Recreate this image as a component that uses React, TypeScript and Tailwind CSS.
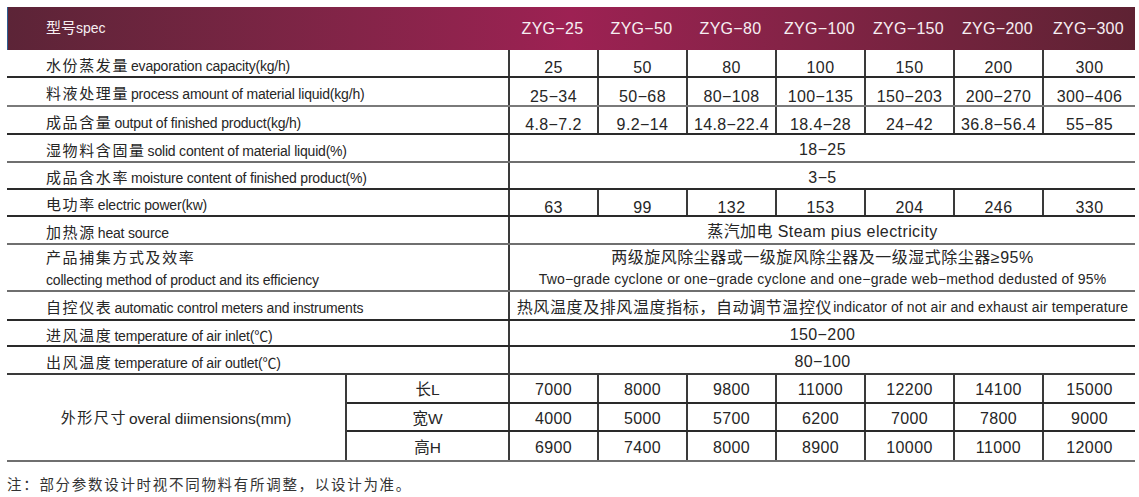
import React from "react";

const models = ["ZYG−25", "ZYG−50", "ZYG−80", "ZYG−100", "ZYG−150", "ZYG−200", "ZYG−300"];
const colW = ["w-[89px]", "w-[89px]", "w-[89px]", "w-[89px]", "w-[89px]", "w-[89px]", "w-[93px]"];

function Label({ zh, en }: { zh: string; en: string }) {
  return (
    <div className="flex w-[501px] shrink-0 items-center pl-[39px] pt-[6px]">
      <span className="text-[15px] tracking-[1.6px]">{zh}</span>
      <span className="ml-[2px] text-[14px] tracking-[-0.2px]">{en}</span>
    </div>
  );
}

function Cells({ values, pad = "pt-[10px]" }: { values: string[]; pad?: string }) {
  return (
    <>
      {values.map((v, i) => (
        <div
          key={i}
          className={`${colW[i]} ${pad} flex shrink-0 items-center justify-center border-l-2 border-[#3a3a3a] text-[16px] tracking-[0.4px]`}
        >
          {v}
        </div>
      ))}
    </>
  );
}

function Span({ children }: { children: React.ReactNode }) {
  return (
    <div className="flex flex-1 items-center justify-center border-l-2 border-[#3a3a3a] pt-[4px] text-[16px] tracking-[0.4px]">
      {children}
    </div>
  );
}

function Row({ cls, children }: { cls: string; children: React.ReactNode }) {
  return <div className={`flex border-b-2 ${cls}`}>{children}</div>;
}

export default function App() {
  return (
    <div className="h-[497px] w-[1139px] bg-white pl-[7px] pt-[7px] font-['Liberation_Sans','Noto_Sans_CJK_SC',sans-serif] text-[#262626]">
      <div className="w-[1128px]">
        <div className="flex h-[43px] border-l border-[#2f5f92] bg-linear-to-r from-[#5c2437] via-[#9d2153] to-[#5e2233] text-[#f6eef2]">
          <div className="flex w-[500px] shrink-0 items-center pl-[38px]">
            <span className="text-[15px]">型号</span>
            <span className="text-[14px]">spec</span>
          </div>
          {models.map((m, i) => (
            <div key={m} className={`${colW[i]} flex shrink-0 items-center justify-center text-[16px] tracking-[0.3px]`}>
              {m}
            </div>
          ))}
        </div>

        <Row cls="h-[28px] border-[#2a2a2a]">
          <Label zh="水份蒸发量" en="evaporation capacity(kg/h)" />
          <Cells values={["25", "50", "80", "100", "150", "200", "300"]} />
        </Row>
        <Row cls="h-[29px] border-[#7a7a7a]">
          <Label zh="料液处理量" en="process amount of material liquid(kg/h)" />
          <Cells values={["25−34", "50−68", "80−108", "100−135", "150−203", "200−270", "300−406"]} />
        </Row>
        <Row cls="h-[28px] border-[#2a2a2a]">
          <Label zh="成品含量" en="output of finished product(kg/h)" />
          <Cells values={["4.8−7.2", "9.2−14", "14.8−22.4", "18.4−28", "24−42", "36.8−56.4", "55−85"]} />
        </Row>
        <Row cls="h-[28px] border-[#6f6f6f]">
          <Label zh="湿物料含固量" en="solid content of material liquid(%)" />
          <Span>18−25</Span>
        </Row>
        <Row cls="h-[27px] border-[#2a2a2a]">
          <Label zh="成品含水率" en="moisture content of finished product(%)" />
          <Span>3−5</Span>
        </Row>
        <Row cls="h-[27px] border-[#2a2a2a]">
          <Label zh="电功率" en="electric power(kw)" />
          <Cells values={["63", "99", "132", "153", "204", "246", "330"]} />
        </Row>
        <Row cls="h-[28px] border-[#6f6f6f]">
          <Label zh="加热源" en="heat source" />
          <Span>
            <span className="text-[16px]">蒸汽加电 Steam pius electricity</span>
          </Span>
        </Row>
        <Row cls="h-[47px] border-[#6f6f6f]">
          <div className="flex w-[501px] shrink-0 flex-col justify-center pl-[39px] pt-[2px]">
            <span className="text-[15px] leading-[23px] tracking-[1.6px]">产品捕集方式及效率</span>
            <span className="text-[14px] leading-[22px] tracking-[-0.2px]">collecting method of product and its efficiency</span>
          </div>
          <div className="flex flex-1 flex-col items-center justify-center border-l-2 border-[#3a3a3a] pt-[2px]">
            <span className="text-[16px] leading-[22px] tracking-[0.5px]">两级旋风除尘器或一级旋风除尘器及一级湿式除尘器≥95%</span>
            <span className="text-[14px] leading-[21px] tracking-[0.2px]">
              Two−grade cyclone or one−grade cyclone and one−grade web−method dedusted of 95%
            </span>
          </div>
        </Row>
        <Row cls="h-[29px] border-[#2a2a2a]">
          <Label zh="自控仪表" en="automatic control meters and instruments" />
          <Span>
            <span className="text-[16px] tracking-[0.6px]">热风温度及排风温度指标，自动调节温控仪</span>
            <span className="ml-[1px] text-[14px] tracking-[0.1px]">indicator of not air and exhaust air temperature</span>
          </Span>
        </Row>
        <Row cls="h-[26px] border-[#2a2a2a]">
          <Label zh="进风温度" en="temperature of air inlet(℃)" />
          <Span>150−200</Span>
        </Row>
        <Row cls="h-[28px] border-[#3a3a3a]">
          <Label zh="出风温度" en="temperature of air outlet(℃)" />
          <Span>80−100</Span>
        </Row>

        <div className="flex border-b-2 border-[#6f6f6f]">
          <div className="flex w-[338px] shrink-0 items-center justify-center pt-[2px]">
            <span className="text-[15px] tracking-[1.6px]">外形尺寸</span>
            <span className="ml-[2px] text-[15.5px] tracking-[-0.1px]">overal diimensions(mm)</span>
          </div>
          <div className="flex-1 border-l-2 border-[#3a3a3a]">
            {[
              { k: "长L", v: ["7000", "8000", "9800", "11000", "12200", "14100", "15000"], c: "h-[29px] border-b-2 border-[#2a2a2a]" },
              { k: "宽W", v: ["4000", "5000", "5700", "6200", "7000", "7800", "9000"], c: "h-[28px] border-b-2 border-[#2a2a2a]" },
              { k: "高H", v: ["6900", "7400", "8000", "8900", "10000", "11000", "12000"], c: "h-[28px]" },
            ].map((r) => (
              <div key={r.k} className={`flex ${r.c}`}>
                <div className="flex w-[161px] shrink-0 items-center justify-center pt-[3px] text-[15.5px]">{r.k}</div>
                <Cells values={r.v} pad="pt-[3px]" />
              </div>
            ))}
          </div>
        </div>
      </div>
      <div className="mt-[13px] text-[14.5px] tracking-[1.7px] text-[#333]">注：部分参数设计时视不同物料有所调整，以设计为准。</div>
    </div>
  );
}
